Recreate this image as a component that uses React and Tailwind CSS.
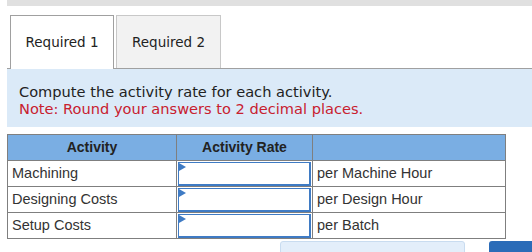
const rows = [
    { name: "Machining", unit: "per Machine Hour" },
    { name: "Designing Costs", unit: "per Design Hour" },
    { name: "Setup Costs", unit: "per Batch" },
];

const App = () => {
    return (
        <div className="w-[532px] h-[252px] overflow-hidden bg-white relative">
            <div className="ml-[7px] h-[6px] bg-[#e0e0e0]" />

            <div className="flex ml-[10px] mt-[9px] gap-[2px] font-['DejaVu_Sans',sans-serif] text-[13.5px] text-[#222]">
                <div className="w-[104px] h-[54px] flex items-center justify-center bg-white border border-b-0 border-[#a0a0a0] relative z-10 -mb-px">
                    Required 1
                </div>
                <div className="w-[105px] h-[53px] flex items-center justify-center bg-[#f2f2f2] border border-b-0 border-[#c8c8c8]">
                    Required 2
                </div>
            </div>

            <div className="ml-[7px] h-[59px] bg-[#dbeaf8] border-t border-[#a0a0a0] pl-[12px] pt-[14px] font-['DejaVu_Sans',sans-serif] text-[14.6px] leading-[17px]">
                <div className="text-[#222]">Compute the activity rate for each activity.</div>
                <div className="text-[#c8202f]">Note: Round your answers to 2 decimal places.</div>
            </div>

            <table className="ml-[7px] mt-[7px] border-collapse font-['Liberation_Sans',Arial,sans-serif] text-[14.5px] text-[#333]">
                <thead>
                    <tr className="bg-[#7aaee3] h-[26px]">
                        <th className="w-[169px] border border-[#7f7f7f] text-[14px] font-bold text-[#222] text-center">Activity</th>
                        <th className="w-[136px] border border-[#7f7f7f] text-[14px] font-bold text-[#222] text-center">Activity Rate</th>
                        <th className="w-[193px] border border-[#7f7f7f]" />
                    </tr>
                </thead>
                <tbody>
                    {rows.map(row => (
                        <tr key={row.name} className="h-[26px]">
                            <td className="border border-[#7f7f7f] pl-[4px]">{row.name}</td>
                            <td className="border border-[#7f7f7f] p-0">
                                <div className="relative h-[24px] mx-px border-2 border-t border-l border-[#3f7bc4] bg-white">
                                    <svg className="absolute left-0 top-0" width="7" height="8" viewBox="0 0 7 8">
                                        <polygon points="0,0 7,4 0,8" fill="#3f7bc4" />
                                    </svg>
                                </div>
                            </td>
                            <td className="border border-[#7f7f7f] pl-[4px]">{row.unit}</td>
                        </tr>
                    ))}
                </tbody>
            </table>

            <div className="absolute left-[280px] top-[241px] w-[185px] h-[20px] rounded-[3px] bg-[#e3eefa] border border-[#c9dcf0]" />
            <div className="absolute left-[489px] top-[241px] w-[60px] h-[20px] rounded-[3px] bg-[#2b6cb8]" />
        </div>
    );
};

export default App;
